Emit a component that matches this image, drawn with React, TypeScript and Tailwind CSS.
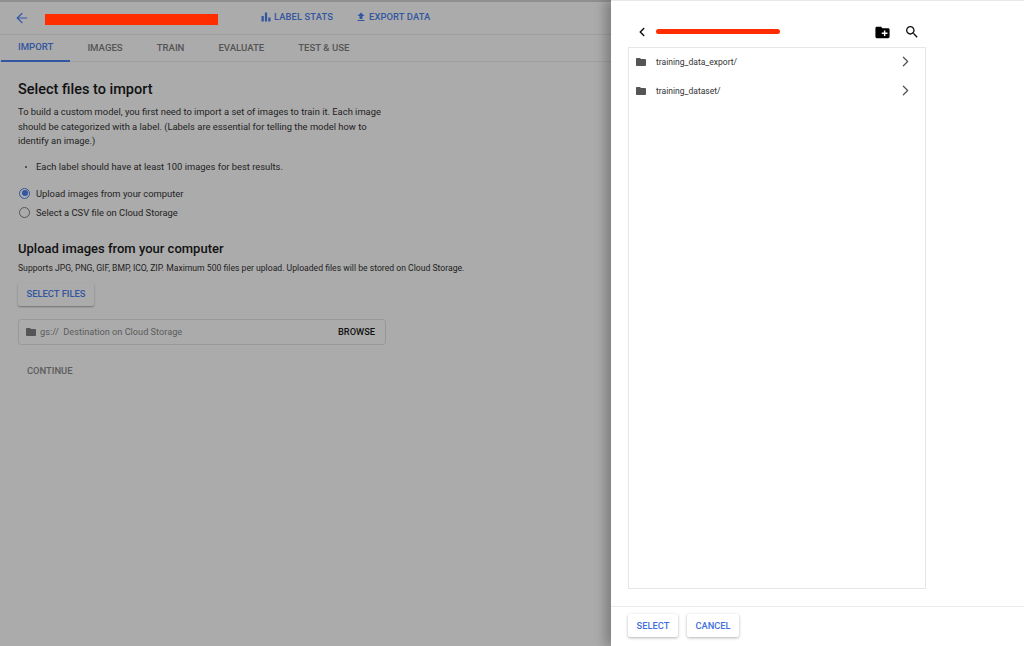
import { ArrowLeft, ChevronLeft, ChevronRight } from "lucide-react";

const tabs = ["IMPORT", "IMAGES", "TRAIN", "EVALUATE", "TEST & USE"];
const folders = ["training_data_export/", "training_dataset/"];

function FolderIcon({ className }: { className: string }) {
  return (
    <svg viewBox="0 0 24 24" className={className} fill="currentColor">
      <path d="M10 4H4c-1.1 0-2 .9-2 2v12c0 1.1.9 2 2 2h16c1.1 0 2-.9 2-2V8c0-1.1-.9-2-2-2h-8l-2-2z" />
    </svg>
  );
}

function MainPanel() {
  return (
    <div className="w-[611px] shrink-0 h-full bg-[#ababab] overflow-hidden">
      {/* Header */}
      <div className="h-[35px] flex items-center border-b border-[#9f9f9f] border-t-2 border-t-[#8f8f8f]">
        <ArrowLeft className="ml-[14px] w-[16px] h-[16px] text-[#2f56a8]" strokeWidth={1.8} />
        <div className="ml-[15px] w-[173px] h-[11px] mt-[2px] bg-[#ff2d00]" />
        <div className="ml-[42px] -mt-[1px] flex items-center gap-[2px] text-[#32569f] text-[9.4px] font-medium tracking-[0.1px]">
          <svg viewBox="0 0 24 24" className="w-[12px] h-[12px]" fill="currentColor">
            <path d="M3 10h4.5v11H3zM9.8 3h4.4v18H9.8zM16.5 13H21v8h-4.5z" />
          </svg>
          LABEL STATS
        </div>
        <div className="ml-[22px] -mt-[1px] flex items-center gap-[2px] text-[#32569f] text-[9.4px] font-medium tracking-[0.1px]">
          <svg viewBox="0 0 24 24" className="w-[12px] h-[12px]" fill="currentColor">
            <path d="M9 16h6v-6h4l-7-7-7 7h4zM5 18h14v2H5z" />
          </svg>
          EXPORT DATA
        </div>
      </div>

      {/* Tabs */}
      <div className="h-[27px] pl-[1px] flex border-b border-[#9f9f9f]">
        {tabs.map((tab, i) => (
          <div
            key={tab}
            className={
              i === 0
                ? "px-[17px] flex items-center text-[9.6px] font-medium text-[#32569f] border-b-2 border-[#32569f] h-[27px]"
                : "px-[17px] flex items-center text-[9.6px] font-medium text-[#555555]"
            }
          >
            {tab}
          </div>
        ))}
      </div>

      {/* Body */}
      <div className="pl-[18px] pt-[19px]">
        <h2 className="text-[14.5px] leading-[18px] font-medium text-[#111111]">Select files to import</h2>
        <p className="mt-[6px] w-[370px] text-[9.4px] leading-[14.5px] text-[#222222]">
          To build a custom model, you first need to import a set of images to train it. Each image
          should be categorized with a label. (Labels are essential for telling the model how to
          identify an image.)
        </p>
        <div className="mt-[11px] flex items-center text-[9.4px] leading-[14px] text-[#222222]">
          <span className="ml-[7px] mr-[9px] w-[2px] h-[2px] rounded-full bg-[#333333]" />
          Each label should have at least 100 images for best results.
        </div>

        <div className="mt-[14px] ml-[1px] flex flex-col gap-[8px] text-[9.4px] leading-[11px] text-[#222222]">
          <label className="flex items-center gap-[6px]">
            <span className="w-[11px] h-[11px] rounded-full border border-[#32569f] flex items-center justify-center">
              <span className="w-[6px] h-[6px] rounded-full bg-[#32569f]" />
            </span>
            Upload images from your computer
          </label>
          <label className="flex items-center gap-[6px]">
            <span className="w-[11px] h-[11px] rounded-full border border-[#555555]" />
            Select a CSV file on Cloud Storage
          </label>
        </div>

        <h2 className="mt-[23px] text-[13px] leading-[16px] font-medium text-[#111111]">
          Upload images from your computer
        </h2>
        <p className="mt-[5px] text-[8.65px] leading-[13px] text-[#222222]">
          Supports JPG, PNG, GIF, BMP, ICO, ZIP. Maximum 500 files per upload. Uploaded files will be stored on Cloud Storage.
        </p>

        <button className="mt-[8px] block w-[76px] h-[23px] rounded-[2px] bg-[#ababab] shadow-[0_1px_2px_rgba(0,0,0,0.35)] text-[9.4px] font-medium text-[#32569f]">
          SELECT FILES
        </button>

        <div className="mt-[13px] w-[368px] h-[26px] flex items-center border border-[#989898] rounded-[3px] pl-[6px] pr-[10px]">
          <FolderIcon className="w-[12px] h-[12px] text-[#555555]" />
          <span className="ml-[3px] text-[9.2px] text-[#5c5c5c]">gs://&nbsp; Destination on Cloud Storage</span>
          <span className="ml-auto text-[9.25px] font-medium text-[#111111]">BROWSE</span>
        </div>

        <div className="mt-[19px] pl-[9px] text-[9.4px] leading-[14px] font-medium text-[#5c5c5c]">CONTINUE</div>
      </div>
    </div>
  );
}

function BrowserPanel() {
  return (
    <div className="flex-1 h-full bg-white flex flex-col shadow-[-6px_0_10px_rgba(0,0,0,0.25)] border-t border-[#e8e8e8]">
      <div className="h-[46px] flex items-center pl-[24px] pr-[104px] shrink-0">
        <ChevronLeft className="w-[14px] h-[14px] text-[#111111] mt-[16px]" strokeWidth={2.6} />
        <div className="ml-[7px] mt-[15px] w-[124px] h-[5px] rounded-full bg-[#ff2d00]" />
        <div className="ml-auto mt-[16px] flex items-center gap-[13px]">
          <svg viewBox="0 0 24 24" className="w-[17px] h-[17px] text-black" fill="currentColor">
            <path d="M20 6h-8l-2-2H4c-1.1 0-2 .9-2 2v12c0 1.1.9 2 2 2h16c1.1 0 2-.9 2-2V8c0-1.1-.9-2-2-2zm-1 8h-3v3h-2v-3h-3v-2h3V9h2v3h3v2z" />
          </svg>
          <svg viewBox="0 0 24 24" className="w-[16px] h-[16px] text-[#111111]" fill="currentColor">
            <path d="M15.5 14h-.79l-.28-.27C15.41 12.59 16 11.11 16 9.5 16 5.91 13.09 3 9.5 3S3 5.91 3 9.5 5.91 16 9.5 16c1.61 0 3.09-.59 4.23-1.57l.27.28v.79l5 4.99L20.49 19l-4.99-5zm-6 0C7.01 14 5 11.99 5 9.5S7.01 5 9.5 5 14 7.01 14 9.5 11.99 14 9.5 14z" />
          </svg>
        </div>
      </div>

      <div className="ml-[17px] w-[298px] h-[542px] border border-[#e6e6e6] shrink-0">
        {folders.map((name) => (
          <div key={name} className="h-[29px] flex items-center pl-[6px] pr-[11px]">
            <FolderIcon className="w-[12px] h-[12px] text-[#555555] -mt-[2px]" />
            <span className="ml-[9px] text-[8.55px] text-[#333333] -mt-[1px]">{name}</span>
            <ChevronRight className="ml-auto w-[17px] h-[17px] text-[#555555] -mt-[2px]" strokeWidth={1.8} />
          </div>
        ))}
      </div>

      <div className="mt-[17px] flex-1 border-t border-[#ececec] pl-[17px] pt-[7px] flex gap-[9px]">
        <button className="w-[50px] h-[23px] rounded-[2px] bg-white shadow-[0_1px_3px_rgba(0,0,0,0.3)] text-[9.3px] font-medium text-[#3f6fdc]">
          SELECT
        </button>
        <button className="w-[52px] h-[23px] rounded-[2px] bg-white shadow-[0_1px_3px_rgba(0,0,0,0.3)] text-[9.3px] font-medium text-[#3f6fdc]">
          CANCEL
        </button>
      </div>
    </div>
  );
}

export default function App() {
  return (
    <div className="w-[1024px] h-[646px] flex overflow-hidden font-['Roboto',sans-serif]">
      <MainPanel />
      <BrowserPanel />
    </div>
  );
}
